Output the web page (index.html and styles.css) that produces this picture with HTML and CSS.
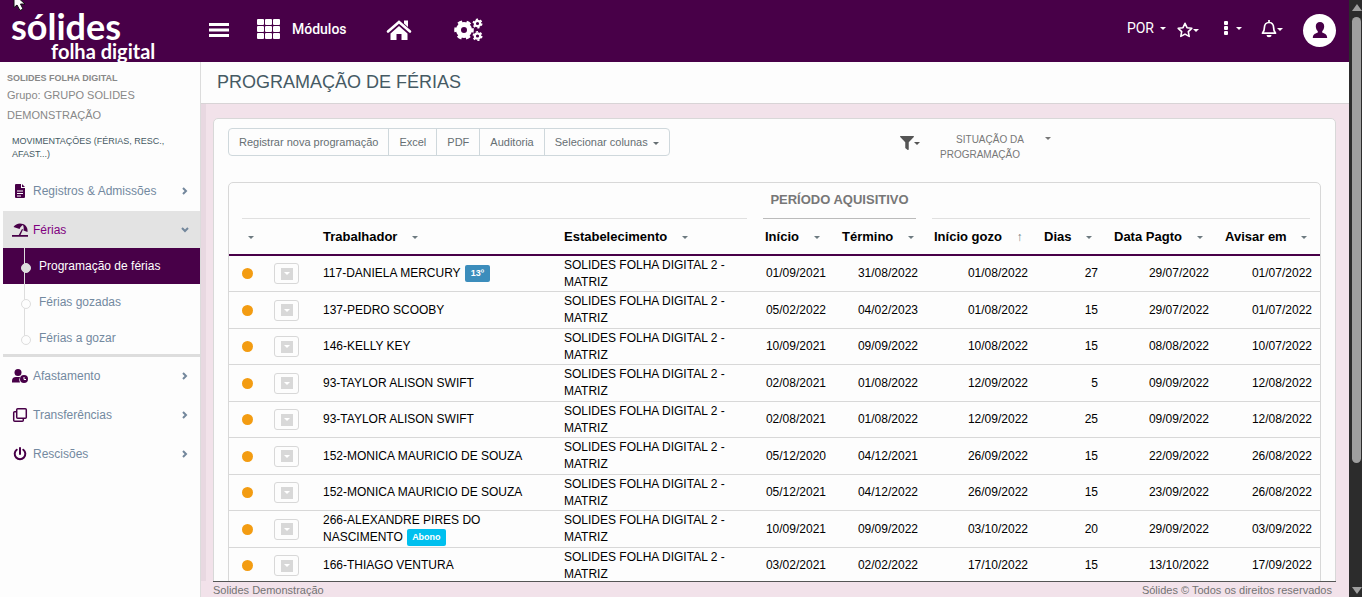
FILE: index.html
```
<!DOCTYPE html>
<html lang="pt-BR">
<head>
  <meta charset="UTF-8" />
  <meta name="viewport" content="width=device-width, initial-scale=1.0" />
  <title>Sólides Folha Digital | Programação de Férias</title>
  <link rel="stylesheet" href="styles.css">
</head>
<body>
  <div class="app">
    <!-- Top bar -->
    <header class="topbar">
      <a class="logo" href="#">
        <span class="logo-name">sólides</span>
        <span class="logo-sub">folha digital</span>
      </a>
      <nav class="top-left">
        <button class="top-btn" aria-label="Menu">
          <svg width="22" height="16" viewBox="0 0 22 16"><path d="M1 2.500h20M1 8h20M1 13.500h20" stroke="#fff" stroke-width="3"/></svg>
        </button>
        <button class="top-btn modules">
          <svg width="23" height="20" viewBox="0 0 23 20" fill="#fff">
            <rect x="0" y="0" width="7" height="6" rx="1"/><rect x="8" y="0" width="7" height="6" rx="1"/><rect x="16" y="0" width="7" height="6" rx="1"/>
            <rect x="0" y="7" width="7" height="6" rx="1"/><rect x="8" y="7" width="7" height="6" rx="1"/><rect x="16" y="7" width="7" height="6" rx="1"/>
            <rect x="0" y="14" width="7" height="6" rx="1"/><rect x="8" y="14" width="7" height="6" rx="1"/><rect x="16" y="14" width="7" height="6" rx="1"/>
          </svg>
          <span>Módulos</span>
        </button>
        <a class="top-btn home" href="#" aria-label="Início">
          <svg width="26" height="22" viewBox="0 0 26 22">
            <path d="M2 12.500 13 3l11 9.500" fill="none" stroke="#fff" stroke-width="2.600" stroke-linecap="round"/>
            <path d="M18 1.500h4V8l-4-3.500zM4.500 14.500 13 7l8.500 7.500v6.500h-6v-6h-5v6h-6z" fill="#fff"/>
          </svg>
        </a>
        <button class="top-btn" aria-label="Configurações">
          <svg width="30" height="24" viewBox="0 0 30 24" fill="none" stroke="#fff">
            <circle cx="11" cy="12" r="5.500" stroke-width="5"/>
            <circle cx="11" cy="12" r="8.200" stroke-width="3.200" stroke-dasharray="4.290 4.290" stroke-dashoffset="2"/>
            <circle cx="24.500" cy="5.500" r="2.700" stroke-width="2.200"/>
            <circle cx="24.500" cy="5.500" r="4.200" stroke-width="1.600" stroke-dasharray="2.200 2.200"/>
            <circle cx="24.500" cy="18" r="2.700" stroke-width="2.200"/>
            <circle cx="24.500" cy="18" r="4.200" stroke-width="1.600" stroke-dasharray="2.200 2.200"/>
          </svg>
        </button>
      </nav>
      <nav class="top-right">
        <button class="top-btn lang">POR <i class="caret"></i></button>
        <button class="top-btn star" aria-label="Favoritos">
          <svg width="16" height="16" viewBox="0 0 16 16"><path d="m8 1.300 2 4.400 4.800.6-3.500 3.300.9 4.800L8 12.100l-4.200 2.300.9-4.800L1.200 6.300 6 5.700z" fill="none" stroke="#fff" stroke-width="1.600" stroke-linejoin="round"/></svg>
          <i class="caret"></i>
        </button>
        <button class="top-btn more" aria-label="Mais opções">
          <svg width="5" height="14" viewBox="0 0 5 14" fill="#fff"><rect x="0" y="0" width="4" height="4" rx="1"/><rect x="0" y="5" width="4" height="4" rx="1"/><rect x="0" y="10" width="4" height="4" rx="1"/></svg>
          <i class="caret"></i>
        </button>
        <button class="top-btn bell" aria-label="Notificações">
          <svg width="16" height="18" viewBox="0 0 16 18">
            <path d="M8 0v2M1.500 13.200C3.200 11.600 3.400 10 3.400 7.600 3.400 4.600 5.400 2.500 8 2.500s4.600 2.100 4.600 5.100c0 2.400.2 4 1.900 5.600z" fill="none" stroke="#fff" stroke-width="1.700" stroke-linejoin="round"/>
            <path d="M5.500 15h5a2.500 2.300 0 0 1-5 0z" fill="#fff"/>
          </svg>
          <i class="caret"></i>
        </button>
        <button class="avatar" aria-label="Perfil">
          <svg width="16" height="18" viewBox="0 0 16 18" fill="#480048"><path d="M8 1c2.600 0 4.200 1.700 4.200 4.200 0 2.100-.9 4-2 5v1.300c1 .8 5 1 5 5.500H.8c0-4.500 4-4.700 5-5.500v-1.300c-1.100-1-2-2.900-2-5C3.800 2.700 5.400 1 8 1z"/></svg>
        </button>
      </nav>
    </header>

    <div class="body">
      <!-- Sidebar -->
      <aside class="sidebar">
        <div class="company">
          <strong>SOLIDES FOLHA DIGITAL</strong>
          <p>Grupo: GRUPO SOLIDES DEMONSTRAÇÃO</p>
        </div>
        <h2 class="section">MOVIMENTAÇÕES (FÉRIAS, RESC., AFAST...)</h2>
        <ul class="menu">
          <li>
            <a href="#">
              <svg class="icon" viewBox="0 0 16 16"><path d="M3 2q0-1 1-1h5v4h4v9q0 1-1 1H4q-1 0-1-1zM10 1l3 3h-3z" fill="#480048"/><path d="M5 8h6M5 10.500h6M5 13h4" stroke="#fff"/></svg>
              <span>Registros &amp; Admissões</span>
              <svg class="chevron" viewBox="0 0 8 8"><path d="m2 1 3 3-3 3"/></svg>
            </a>
          </li>
          <li class="expanded">
            <a class="open" href="#">
              <svg class="icon" viewBox="0 0 16 16"><path d="M1.500 5C3.500 1.800 7.500.5 11 2c3.400 1.400 5 4.500 4.500 8l-4-1.600c.4-2 .3-4-.6-5.400-1.500 1-2.700 2.400-3.300 4zM10 7l1 .5L8.500 13H16v1.800H0V13h6.800z" fill="#480048"/></svg>
              <span>Férias</span>
              <svg class="chevron" viewBox="0 0 8 8"><path d="m1 2 3 3 3-3"/></svg>
            </a>
            <ul class="submenu">
              <li><a class="current" href="#">Programação de férias</a></li>
              <li><a href="#">Férias gozadas</a></li>
              <li><a href="#">Férias a gozar</a></li>
            </ul>
          </li>
          <li>
            <a href="#">
              <svg class="icon" viewBox="0 0 16 16"><g fill="#480048"><circle cx="6" cy="4.500" r="3.500"/><path d="M0 14.500V13q0-4 4-4h4q-1.500 3 0 5.500z"/><circle cx="12" cy="11" r="4"/></g><path d="M12 9v2.500h2" fill="none" stroke="#fff"/></svg>
              <span>Afastamento</span>
              <svg class="chevron" viewBox="0 0 8 8"><path d="m2 1 3 3-3 3"/></svg>
            </a>
          </li>
          <li>
            <a href="#">
              <svg class="icon" viewBox="0 0 16 16" fill="none" stroke="#480048" stroke-width="1.500"><rect x="4.700" y="1.700" width="9.600" height="9.600" rx="1"/><path d="M4 4.700H2.700q-1 0-1 1v7.600q0 1 1 1h7.600q1 0 1-1V12"/></svg>
              <span>Transferências</span>
              <svg class="chevron" viewBox="0 0 8 8"><path d="m2 1 3 3-3 3"/></svg>
            </a>
          </li>
          <li>
            <a href="#">
              <svg class="icon" viewBox="0 0 16 16" fill="none" stroke="#480048" stroke-width="2" stroke-linecap="round"><path d="M8 2v6M4.700 3.700a5.300 5.300 0 1 0 6.600 0"/></svg>
              <span>Rescisões</span>
              <svg class="chevron" viewBox="0 0 8 8"><path d="m2 1 3 3-3 3"/></svg>
            </a>
          </li>
        </ul>
      </aside>

      <!-- Content -->
      <main class="main">
        <h1>PROGRAMAÇÃO DE FÉRIAS</h1>
        <div class="content">
          <section class="panel">
            <div class="toolbar">
              <div class="btn-group">
                <button>Registrar nova programação</button>
                <button>Excel</button>
                <button>PDF</button>
                <button>Auditoria</button>
                <button>Selecionar colunas <i class="caret"></i></button>
              </div>
              <div class="filters">
                <button class="filter-btn" aria-label="Filtrar">
                  <svg width="14" height="14" viewBox="0 0 512 512" fill="#555"><path d="M487.976 0H24.028C2.710 0-8.047 25.866 7.058 40.971L192 225.941V432c0 7.831 3.821 15.170 10.237 19.662l80 55.980C298.020 518.690 320 507.493 320 487.980V225.941l184.947-184.970C520.021 25.896 509.338 0 487.976 0z"/></svg>
                  <i class="caret"></i>
                </button>
                <button class="situation"><span>SITUAÇÃO DA PROGRAMAÇÃO</span><i class="caret"></i></button>
              </div>
            </div>

            <div class="card">
              <table>
                <colgroup>
                  <col class="c-status"><col class="c-action"><col><col class="c-place">
                  <col class="c-start"><col class="c-end"><col class="c-leave"><col class="c-days"><col class="c-pay"><col class="c-notice">
                </colgroup>
                <thead>
                  <tr class="groups">
                    <th colspan="4"><div></div></th>
                    <th colspan="2"><div class="named">PERÍODO AQUISITIVO</div></th>
                    <th colspan="4"><div></div></th>
                  </tr>
                  <tr class="heads">
                    <th class="status-head"><i class="caret"></i></th>
                    <th></th>
                    <th>Trabalhador <i class="caret"></i></th>
                    <th>Estabelecimento <i class="caret"></i></th>
                    <th>Início <i class="caret"></i></th>
                    <th>Término <i class="caret"></i></th>
                    <th>Início gozo <i class="sorted">↑</i></th>
                    <th>Dias <i class="caret"></i></th>
                    <th>Data Pagto <i class="caret"></i></th>
                    <th>Avisar em <i class="caret"></i></th>
                  </tr>
                </thead>
                <tbody id="rows"></tbody>
              </table>
            </div>
          </section>
        </div>
        <footer class="footer">
          <span>Solides Demonstração</span>
          <span>Sólides © Todos os direitos reservados</span>
        </footer>
      </main>
    </div>
  </div>

  <div class="scrollbar">
    <i class="arrow-up"></i>
    <div class="track"><div class="thumb"></div></div>
    <i class="arrow-down"></i>
  </div>

  <svg class="pointer" width="14" height="12" viewBox="0 0 14 12"><path d="M1-6v13.500L4 5l3 5.500 3-1.500L7.500 4H12z" fill="#fff" stroke="#111"/></svg>

  <script src="script.js"></script>
</body>
</html>
```
FILE: styles.css
```
* { box-sizing: border-box; }
body {
  margin: 0;
  height: 100vh;
  display: flex;
  overflow: hidden;
  font-family: "Liberation Sans", Arial, sans-serif;
  font-size: 12px;
  color: #000;
  background: #f2e2ea;
}
button {
  font-family: inherit;
  background: none;
  border: none;
  padding: 0;
  cursor: pointer;
}
a { text-decoration: none; color: inherit; }
ul { list-style: none; margin: 0; padding: 0; }
svg { flex: none; }
.caret {
  display: inline-block;
  flex: none;
  border: 3px solid transparent;
  border-top-color: currentColor;
  border-bottom: 0;
  vertical-align: middle;
}
.app {
  flex: 1;
  min-width: 0;
  display: flex;
  flex-direction: column;
}

/* top bar */
.topbar {
  flex: none;
  height: 62px;
  display: flex;
  background: #480048;
  color: #fff;
  font-family: Roboto, sans-serif;
}
.logo {
  width: 208px;
  padding: 11px 0 0 11px;
  font-family: Lato, sans-serif;
  font-weight: 700;
}
.logo span { display: block; }
.logo-name { font-size: 36px; line-height: 31px; }
.logo-sub {
  font-size: 20px;
  line-height: 18px;
  padding-left: 40px;
}
.top-left, .top-right {
  display: flex;
  align-items: center;
  height: 60px;
}
.top-left { gap: 27px; }
.top-right { margin-left: auto; padding-right: 13px; }
.top-btn {
  display: flex;
  align-items: center;
  color: #fff;
  font-size: 14px;
}
.modules { gap: 12px; font-weight: 500; padding-bottom: 2px; }
.home { margin: 0 14px 0 12px; }
.lang { gap: 6px; margin-right: 11px; padding-bottom: 4px; }
.star { margin-right: 25px; }
.more { gap: 7px; margin-right: 19px; padding-bottom: 4px; }
.bell { margin-right: 20px; padding-bottom: 2px; }
.avatar {
  width: 33px;
  height: 33px;
  border-radius: 50%;
  background: #fff;
  display: flex;
  align-items: center;
  justify-content: center;
}

/* sidebar */
.body { flex: 1; min-height: 0; display: flex; }
.sidebar {
  flex: none;
  width: 200px;
  background: #fdfdfd;
  padding: 10px 0 0;
  color: #888;
}
.company { padding: 0 7px; font-size: 11px; line-height: 20px; }
.company strong { display: block; font-size: 9px; line-height: 13px; }
.company p { margin: 0; }
.section {
  margin: 10px 12px 11px;
  font-size: 9px;
  line-height: 13px;
  font-weight: 400;
  color: #455a64;
}
.menu { padding-left: 3px; color: #7389a0; }
.menu > li { margin-bottom: 2px; }
.menu > li.expanded { margin-bottom: 0; }
.menu > li > a {
  display: flex;
  align-items: center;
  height: 37px;
  padding: 0 11px 0 9px;
}
.menu > li > a span { flex: 1; margin-left: 5px; }
.menu > li > a.open { background: #e3e3e3; color: #800080; }
.icon { width: 16px; height: 16px; }
.chevron {
  width: 8px;
  height: 8px;
  fill: none;
  stroke: #73879c;
  stroke-width: 2;
}
.submenu { border-bottom: 3px solid #ddd; }
.submenu li:last-child { height: 34px; }
.submenu a {
  position: relative;
  display: block;
  height: 36px;
  line-height: 36px;
  padding-left: 36px;
}
.submenu a::before {
  content: "";
  position: absolute;
  left: 21px;
  top: 0;
  bottom: 0;
  border-left: 1px solid #ddd;
}
.submenu li:last-child a::before { bottom: 16px; }
.submenu a::after {
  content: "";
  position: absolute;
  left: 18px;
  top: 15px;
  width: 8px;
  height: 8px;
  border: 1px solid #ddd;
  border-radius: 50%;
  background: #fdfdfd;
}
.submenu a.current { background: #480048; color: #fff; }
.submenu a.current::after { background: #ddd; }

/* content */
.main {
  flex: 1;
  min-width: 0;
  display: flex;
  flex-direction: column;
  border-left: 1px solid #dcdcdc;
}
h1 {
  flex: none;
  margin: 0;
  padding-left: 16px;
  height: 42px;
  line-height: 40px;
  font-size: 18px;
  font-weight: 400;
  color: #455a64;
  background: #fdfdfd;
  border-bottom: 1px solid #d8d4d6;
}
.content {
  flex: 1;
  min-height: 0;
  overflow: hidden;
  padding: 14px 13px 0 7px;
  border-left: 5px solid #e8d8e1;
}
.panel {
  padding: 9px 14px 0;
  background: #fdfdfd;
  border: 1px solid #d8d8d8;
  border-radius: 5px;
}
.toolbar {
  display: flex;
  justify-content: space-between;
  align-items: flex-start;
  height: 54px;
}
.btn-group {
  display: flex;
  border: 1px solid #cfd8dc;
  border-radius: 4px;
}
.btn-group button {
  height: 26px;
  padding: 0 10px;
  font-size: 11px;
  color: #666f73;
  border-right: 1px solid #cfd8dc;
}
.btn-group button:last-child { border-right: none; }
.btn-group .caret { margin-left: 2px; }
.filters { display: flex; padding: 4px 270px 0 0; color: #666; }
.filter-btn {
  display: flex;
  align-items: center;
  height: 22px;
  margin-right: 14px;
  color: #555;
}
.situation { display: flex; font-size: 10px; line-height: 15px; color: #777; }
.situation span { width: 92px; text-indent: 20px; }
.situation .caret { margin: 5px 0 0 19px; }
.card { border: 1px solid #d8d8d8; border-radius: 5px; }

/* table */
table {
  width: 100%;
  table-layout: fixed;
  border-collapse: separate;
  border-spacing: 0;
}
.c-status { width: 37px; }
.c-action { width: 49px; }
.c-place { width: 201px; }
.c-start { width: 77px; }
.c-end { width: 92px; }
.c-leave { width: 110px; }
.c-days { width: 70px; }
.c-pay { width: 111px; }
.c-notice { width: 103px; }
.groups th { padding: 0 10px 0 6px; }
.groups th:first-child { padding-left: 13px; }
.groups div {
  height: 36px;
  line-height: 34px;
  font-size: 13px;
  color: #777;
  border-bottom: 1px solid #e0e0e0;
}
.groups .named { border-color: #bbb; }
.heads th {
  height: 37px;
  padding: 0 0 0 8px;
  font-size: 13px;
  text-align: left;
  white-space: nowrap;
  border-bottom: 2px solid #480048;
}
.heads .caret, .sorted { margin-left: 11px; color: #6d7a80; }
.heads .status-head { padding-left: 19px; }
.heads .status-head .caret { margin-left: 0; }
.sorted { font-style: normal; font-weight: 700; font-size: 12px; }
tbody td {
  height: 37px;
  padding: 0 8px;
  line-height: 17px;
  border-bottom: 1px solid #d8d8d8;
}
tbody tr:nth-child(odd) td { height: 36px; }
.num { text-align: right; }
td.status { padding-left: 13px; }
.dot {
  display: block;
  width: 11px;
  height: 11px;
  border-radius: 50%;
  background: #f39c12;
}
.row-btn {
  display: flex;
  align-items: center;
  justify-content: center;
  width: 25px;
  height: 21px;
  border: 1px solid #d8d8d8;
  border-radius: 3px;
}
.row-btn i {
  display: flex;
  align-items: center;
  justify-content: center;
  width: 12px;
  height: 12px;
  background: #d8d8d8;
  color: #fff;
}
.label {
  display: inline-block;
  height: 17px;
  margin-left: 1px;
  padding: 0 5px;
  font-size: 9px;
  line-height: 16px;
  font-weight: 700;
  color: #fff;
  border-radius: 2px;
  vertical-align: top;
}
.label-13 { background: #3c8dbc; padding: 0 6px; }
.label-abono { background: #00c0ef; }

.footer {
  flex: none;
  display: flex;
  justify-content: space-between;
  height: 16px;
  margin: 0 13px 0 12px;
  padding-right: 4px;
  line-height: 17px;
  font-size: 11px;
  color: #737373;
  border-top: 1px solid #555;
}

/* window scrollbar */
.scrollbar {
  flex: none;
  width: 13px;
  display: flex;
  flex-direction: column;
  align-items: center;
  gap: 6px;
  padding: 4px 0 3px 2px;
  background: #2c2c2c;
}
.arrow-up, .arrow-down {
  border: 5px solid transparent;
  border-top: 0;
  border-bottom: 7px solid #9f9f9f;
}
.arrow-down { border-top: 7px solid #9f9f9f; border-bottom: 0; }
.track { flex: 1; }
.thumb { width: 9px; height: 79%; border-radius: 5px; background: #9f9f9f; }
.pointer { position: absolute; left: 13px; top: 0; }
```
FILE: script.js
```
const place = "SOLIDES FOLHA DIGITAL 2 - MATRIZ";
const data = [
  ["117-DANIELA MERCURY", "01/09/2021", "31/08/2022", "01/08/2022", 27, "29/07/2022", "01/07/2022", "13º"],
  ["137-PEDRO SCOOBY", "05/02/2022", "04/02/2023", "01/08/2022", 15, "29/07/2022", "01/07/2022"],
  ["146-KELLY KEY", "10/09/2021", "09/09/2022", "10/08/2022", 15, "08/08/2022", "10/07/2022"],
  ["93-TAYLOR ALISON SWIFT", "02/08/2021", "01/08/2022", "12/09/2022", 5, "09/09/2022", "12/08/2022"],
  ["93-TAYLOR ALISON SWIFT", "02/08/2021", "01/08/2022", "12/09/2022", 25, "09/09/2022", "12/08/2022"],
  ["152-MONICA MAURICIO DE SOUZA", "05/12/2020", "04/12/2021", "26/09/2022", 15, "22/09/2022", "26/08/2022"],
  ["152-MONICA MAURICIO DE SOUZA", "05/12/2021", "04/12/2022", "26/09/2022", 15, "23/09/2022", "26/08/2022"],
  ["266-ALEXANDRE PIRES DO NASCIMENTO", "10/09/2021", "09/09/2022", "03/10/2022", 20, "29/09/2022", "03/09/2022", "Abono"],
  ["166-THIAGO VENTURA", "03/02/2021", "02/02/2022", "17/10/2022", 15, "13/10/2022", "17/09/2022"]
];

document.getElementById("rows").innerHTML = data.map(([name, start, end, leave, days, pay, notice, tag]) => {
  const label = tag ? ` <span class="label ${tag === "Abono" ? "label-abono" : "label-13"}">${tag}</span>` : "";
  const nums = [start, end, leave, days, pay, notice].map(v => `<td class="num">${v}</td>`).join("");
  return `<tr>
    <td class="status"><i class="dot"></i></td>
    <td><button class="row-btn" aria-label="Opções"><i><b class="caret"></b></i></button></td>
    <td>${name}${label}</td>
    <td>${place}</td>
    ${nums}
  </tr>`;
}).join("");
```
